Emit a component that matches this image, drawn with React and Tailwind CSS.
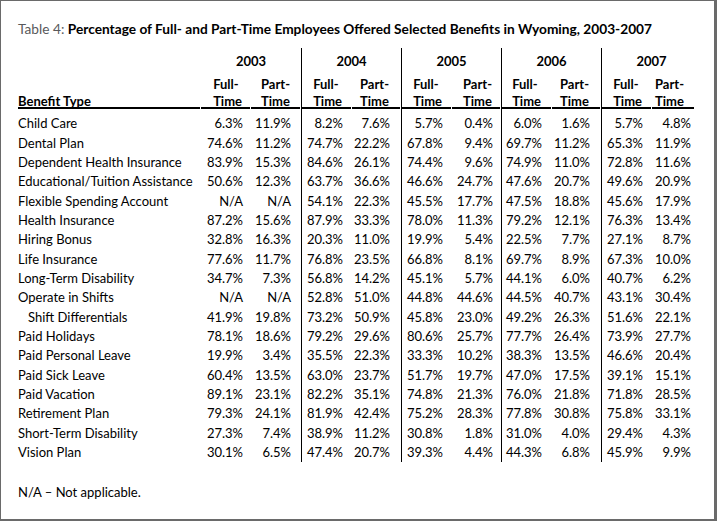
const groups = [
  { year: "2003", box: "w-[100px]", full: "pr-[8px]", part: "pr-[10px]", line: "mr-px" },
  { year: "2004", box: "w-[100px] border-l border-black", full: "pr-[9px]", part: "pr-[11px]", line: "mr-px" },
  { year: "2005", box: "w-[100px] border-l border-black", full: "pr-[9px]", part: "pr-[8px]", line: "mr-px" },
  { year: "2006", box: "w-[100px] border-l border-black", full: "pr-[10px]", part: "pr-[11px]", line: "mr-px" },
  { year: "2007", box: "w-[100px] border-l border-black", full: "pr-[9px]", part: "pr-[10px]", line: "mr-[7px]" },
];

const rows = [
  ["Child Care", "6.3%", "11.9%", "8.2%", "7.6%", "5.7%", "0.4%", "6.0%", "1.6%", "5.7%", "4.8%"],
  ["Dental Plan", "74.6%", "11.2%", "74.7%", "22.2%", "67.8%", "9.4%", "69.7%", "11.2%", "65.3%", "11.9%"],
  ["Dependent Health Insurance", "83.9%", "15.3%", "84.6%", "26.1%", "74.4%", "9.6%", "74.9%", "11.0%", "72.8%", "11.6%"],
  ["Educational/Tuition Assistance", "50.6%", "12.3%", "63.7%", "36.6%", "46.6%", "24.7%", "47.6%", "20.7%", "49.6%", "20.9%"],
  ["Flexible Spending Account", "N/A", "N/A", "54.1%", "22.3%", "45.5%", "17.7%", "47.5%", "18.8%", "45.6%", "17.9%"],
  ["Health Insurance", "87.2%", "15.6%", "87.9%", "33.3%", "78.0%", "11.3%", "79.2%", "12.1%", "76.3%", "13.4%"],
  ["Hiring Bonus", "32.8%", "16.3%", "20.3%", "11.0%", "19.9%", "5.4%", "22.5%", "7.7%", "27.1%", "8.7%"],
  ["Life Insurance", "77.6%", "11.7%", "76.8%", "23.5%", "66.8%", "8.1%", "69.7%", "8.9%", "67.3%", "10.0%"],
  ["Long-Term Disability", "34.7%", "7.3%", "56.8%", "14.2%", "45.1%", "5.7%", "44.1%", "6.0%", "40.7%", "6.2%"],
  ["Operate in Shifts", "N/A", "N/A", "52.8%", "51.0%", "44.8%", "44.6%", "44.5%", "40.7%", "43.1%", "30.4%"],
  ["Shift Differentials", "41.9%", "19.8%", "73.2%", "50.9%", "45.8%", "23.0%", "49.2%", "26.3%", "51.6%", "22.1%"],
  ["Paid Holidays", "78.1%", "18.6%", "79.2%", "29.6%", "80.6%", "25.7%", "77.7%", "26.4%", "73.9%", "27.7%"],
  ["Paid Personal Leave", "19.9%", "3.4%", "35.5%", "22.3%", "33.3%", "10.2%", "38.3%", "13.5%", "46.6%", "20.4%"],
  ["Paid Sick Leave", "60.4%", "13.5%", "63.0%", "23.7%", "51.7%", "19.7%", "47.0%", "17.5%", "39.1%", "15.1%"],
  ["Paid Vacation", "89.1%", "23.1%", "82.2%", "35.1%", "74.8%", "21.3%", "76.0%", "21.8%", "71.8%", "28.5%"],
  ["Retirement Plan", "79.3%", "24.1%", "81.9%", "42.4%", "75.2%", "28.3%", "77.8%", "30.8%", "75.8%", "33.1%"],
  ["Short-Term Disability", "27.3%", "7.4%", "38.9%", "11.2%", "30.8%", "1.8%", "31.0%", "4.0%", "29.4%", "4.3%"],
  ["Vision Plan", "30.1%", "6.5%", "47.4%", "20.7%", "39.3%", "4.4%", "44.3%", "6.8%", "45.9%", "9.9%"],
];

function SubHead({ label, pad, line, wide }) {
  return (
    <div className={wide ? "flex-1" : "w-[50px]"}>
      <div className={`h-[33px] border-b-2 border-black text-right leading-[17px] ${line} ${pad}`}>
        <span className="inline-block text-left">
          {label}-<br />Time
        </span>
      </div>
    </div>
  );
}

export default function App() {
  return (
    <div className="w-[717px] h-[521px] box-border bg-white border-t border-l border-r-[3px] border-b-2 border-[#6a6a6a] pl-[17px] pt-[18.5px] font-['Lato',sans-serif] text-[13px] text-black">
      <p className="leading-[17px] text-[13.7px] font-bold whitespace-nowrap">
        <span className="font-normal text-[#58595b]">Table 4: </span>
        Percentage of Full- and Part-Time Employees Offered Selected Benefits in Wyoming, 2003-2007
      </p>

      <div className="mt-[11.5px]">
        {/* header */}
        <div className="flex font-bold">
          <div className="w-[183px]">
            <div className="h-[61px] mr-px border-b-2 border-black pt-[45px] leading-[17px]">Benefit Type</div>
          </div>
          {groups.map(g => (
            <div key={g.year} className={`flex flex-col ${g.box}`}>
              <div className="h-[28px] pt-[4.5px] leading-[17px] text-center">{g.year}</div>
              <div className="flex">
                <SubHead label="Full" pad={g.full} line="mr-px" />
                <SubHead label="Part" pad={g.part} line={g.line} wide />
              </div>
            </div>
          ))}
        </div>

        {/* body */}
        {rows.map((r, i) => (
          <div key={r[0]} className="flex leading-[19.33px]">
            <div className={`w-[183px] ${i === 0 ? "pt-[5.3px]" : ""} ${r[0] === "Shift Differentials" ? "pl-[10px]" : ""}`}>
              {r[0]}
            </div>
            {groups.map((g, j) => (
              <div key={g.year} className={`flex ${g.box} ${i === 0 ? "pt-[5.3px]" : ""}`}>
                <div className={`w-[50px] text-right ${g.full}`}>{r[1 + j * 2]}</div>
                <div className={`flex-1 text-right ${g.part}`}>{r[2 + j * 2]}</div>
              </div>
            ))}
          </div>
        ))}
      </div>

      <p className="mt-[22px] leading-[17px]">N/A – Not applicable.</p>
    </div>
  );
}
